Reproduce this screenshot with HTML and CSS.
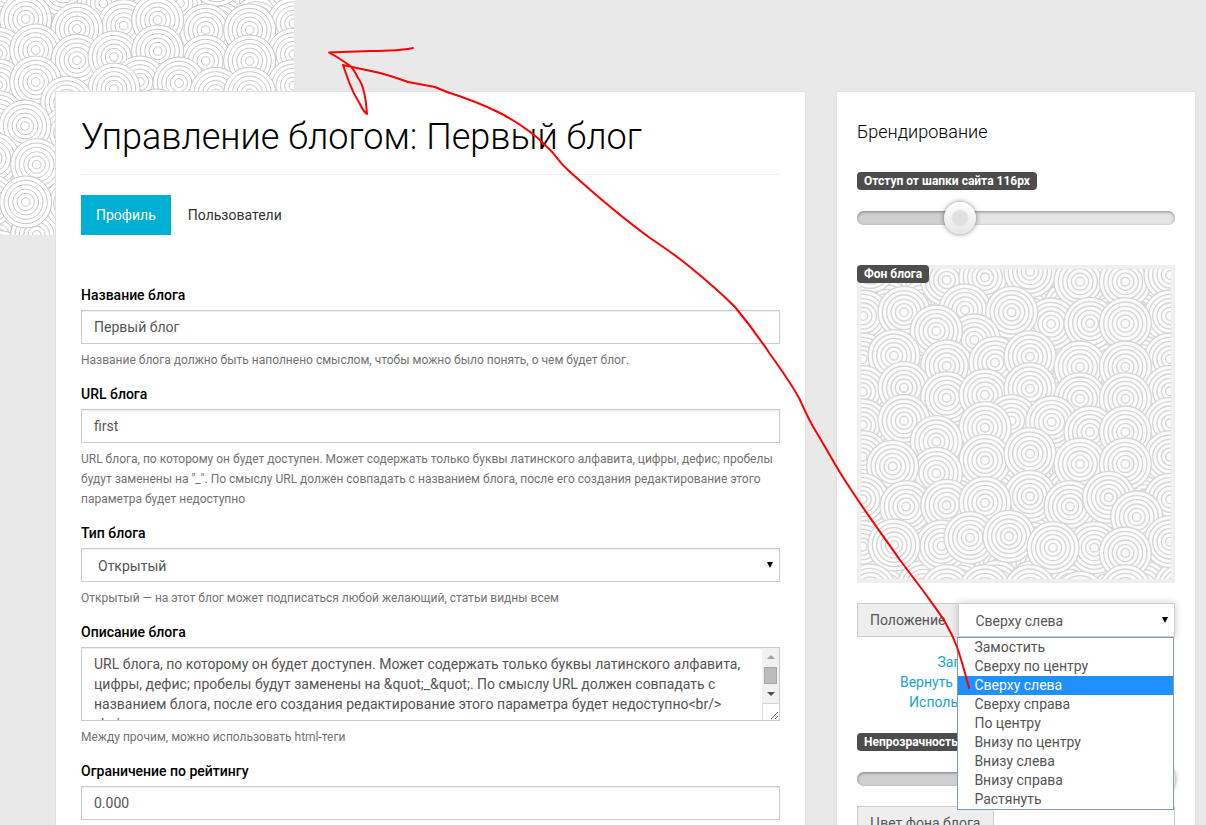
FILE: index.html
```
<!DOCTYPE html>
<html lang="ru">
<head>
    <meta charset="UTF-8">
    <meta name="viewport" content="width=device-width, initial-scale=1.0">
    <title>Управление блогом: Первый блог</title>
    <link rel="stylesheet" href="styles.css">
</head>
<body>
    <svg class="page-pattern" id="page-pattern" viewBox="0 0 882 705" aria-hidden="true"></svg>

    <div class="wrapper">
        <main class="panel content">
            <h1>Управление блогом: Первый блог</h1>

            <nav class="tabs">
                <a href="#" class="tab active">Профиль</a>
                <a href="#" class="tab">Пользователи</a>
            </nav>

            <form class="blog-form">
                <div class="field">
                    <label for="blog-title">Название блога</label>
                    <input type="text" class="control" id="blog-title" value="Первый блог">
                    <p class="note">Название блога должно быть наполнено смыслом, чтобы можно было понять, о чем будет блог.</p>
                </div>

                <div class="field">
                    <label for="blog-url">URL блога</label>
                    <input type="text" class="control" id="blog-url" value="first">
                    <p class="note">URL блога, по которому он будет доступен. Может содержать только буквы латинского алфавита, цифры, дефис; пробелы будут заменены на "_". По смыслу URL должен совпадать с названием блога, после его создания редактирование этого параметра будет недоступно</p>
                </div>

                <div class="field">
                    <label for="blog-type">Тип блога</label>
                    <div class="select">
                        <select class="control" id="blog-type">
                            <option>Открытый</option>
                            <option>Закрытый</option>
                        </select>
                    </div>
                    <p class="note">Открытый — на этот блог может подписаться любой желающий, статьи видны всем</p>
                </div>

                <div class="field">
                    <label for="blog-description">Описание блога</label>
                    <div class="textarea">
                        <textarea class="control" id="blog-description">URL блога, по которому он будет доступен. Может содержать только буквы латинского алфавита, цифры, дефис; пробелы будут заменены на &amp;quot;_&amp;quot;. По смыслу URL должен совпадать с названием блога, после его создания редактирование этого параметра будет недоступно&lt;br/&gt;
&lt;br/&gt;
</textarea>
                        <div class="scrollbar" aria-hidden="true">
                            <span class="scroll-up"></span>
                            <span class="scroll-thumb"></span>
                            <span class="scroll-down"></span>
                        </div>
                    </div>
                    <p class="note">Между прочим, можно использовать html-теги</p>
                </div>

                <div class="field">
                    <label for="blog-rating">Ограничение по рейтингу</label>
                    <input type="text" class="control" id="blog-rating" value="0.000">
                </div>
            </form>
        </main>

        <aside class="panel sidebar">
            <h2>Брендирование</h2>

            <label class="badge" for="header-offset">Отступ от шапки сайта 116px</label>
            <input type="range" class="slider offset" id="header-offset" min="0" max="380" value="116">

            <div class="preview">
                <span class="badge">Фон блога</span>
                <svg class="preview-pattern" id="preview-pattern" viewBox="33 27 930 930" aria-hidden="true"></svg>
            </div>

            <div class="group">
                <label class="addon" for="position">Положение</label>
                <div class="select focused">
                    <select class="control" id="position">
                        <option>Сверху слева</option>
                    </select>
                    <ul class="dropdown">
                        <li>Замостить</li>
                        <li>Сверху по центру</li>
                        <li class="selected">Сверху слева</li>
                        <li>Сверху справа</li>
                        <li>По центру</li>
                        <li>Внизу по центру</li>
                        <li>Внизу слева</li>
                        <li>Внизу справа</li>
                        <li>Растянуть</li>
                    </ul>
                </div>
            </div>

            <div class="links">
                <a href="#">Загрузить изображение</a>
                <a href="#">Вернуть предыдущее изображение</a>
                <a href="#">Использовать стандартный фон</a>
            </div>

            <label class="badge" for="opacity">Непрозрачность фона</label>
            <input type="range" class="slider opacity" id="opacity" min="0" max="100" value="100">

            <div class="group">
                <label class="addon" for="color">Цвет фона блога</label>
                <input type="text" class="control" id="color">
            </div>
        </aside>
    </div>

    <svg class="arrow" width="1206" height="825" aria-hidden="true">
        <path d="M413 48C400 51 385 51 370 51L329 52.5L337 57L349 65Q354 69 358 78Q362 83 364 92Q366 100 367 114Q363 111 360 104Q353 93 349 82L343 65C352 67 368 70 380 73Q395 77 408 82L435 87L447 92C466 98 484 105 500 113Q530 129 546 146Q552 151 557 158Q562 165 569 171C590 190 620 216 650 238C665 248 678 257 690 267C706 280 720 292 735 307C750 325 760 339 770 354C785 375 793 386 800 400C805 411 809 420 815 430C828 451 838 471 850 488C868 516 884 537 900 560L924 592C932 603 939 612 945 622C951 632 954 639 957 647C962 661 965 673 969 688"/>
    </svg>

    <script src="script.js"></script>
</body>
</html>
```
FILE: styles.css
```
* {
    box-sizing: border-box;
}
body {
    position: relative;
    height: 100vh;
    margin: 0;
    overflow: hidden;
    font-family: Roboto, "Liberation Sans", sans-serif;
    font-size: 14px;
    line-height: 20px;
    color: #333;
    background: #e9e9e9;
}
a {
    color: #19a5cb;
    text-decoration: none;
}
h1 {
    margin: 0 0 20px;
    padding: 20px 0 12px;
    border-bottom: 1px solid #eee;
    font-size: 36px;
    font-weight: 300;
    line-height: 50px;
    color: #000;
}
h2 {
    margin: 0 0 30px;
    font-size: 18px;
    font-weight: 300;
    line-height: 20px;
    color: #000;
}
.page-pattern {
    position: absolute;
    top: 0;
    left: 0;
    width: 294px;
    height: 235px;
}
.ring {
    fill: #fff;
    stroke: #c8c8c8;
    stroke-width: 3;
}
.wrapper {
    position: relative;
    display: grid;
    grid-template-columns: 1fr 360px;
    gap: 30px;
    min-height: 100%;
    padding: 91px 10px 0 55px;
}
.panel {
    border: 1px solid #e2e2e2;
    border-bottom: 0;
    background: #fff;
}
.content {
    padding: 0 25px;
}
.sidebar {
    padding: 30px 20px;
}

/* Tabs */
.tabs {
    display: flex;
    gap: 2px;
    margin-bottom: 50px;
}
.tab {
    padding: 10px 15px;
    color: #333;
}
.tab.active {
    color: #fff;
    background: #00b0d4;
}

/* Form */
.field {
    margin-bottom: 14px;
}
.field label {
    display: block;
    margin-bottom: 5px;
    font-weight: 500;
    color: #000;
}
.note {
    margin: 6px 0 0;
    font-size: 12px;
    color: #737373;
}
.control {
    display: block;
    width: 100%;
    height: 34px;
    padding: 6px 12px;
    border: 1px solid #ccc;
    border-radius: 0;
    outline: 0;
    font: inherit;
    color: #555;
    background: #fff;
    box-shadow: inset 0 1px 1px rgba(0,0,0,0.075);
    appearance: none;
}
.textarea {
    position: relative;
}
.textarea .control {
    height: 74px;
    padding-right: 24px;
    resize: vertical;
}
.scrollbar {
    position: absolute;
    top: 1px;
    right: 1px;
    display: flex;
    flex-direction: column;
    align-items: center;
    justify-content: space-between;
    width: 17px;
    height: 56px;
    padding: 7px 0;
    border-bottom: 1px solid #d6d6d6;
    background: #f1f1f1;
    pointer-events: none;
}
/* Left edge of the resize corner */
.scrollbar::after {
    content: "";
    position: absolute;
    top: 56px;
    left: 0;
    height: 16px;
    border-left: 1px solid #d6d6d6;
}
.scroll-up, .scroll-down {
    border: 4px solid transparent;
}
.scroll-up {
    border-top: 0;
    border-bottom-color: #a3a3a3;
}
.scroll-down {
    border-bottom: 0;
    border-top-color: #505050;
}
.scroll-thumb {
    width: 13px;
    height: 17px;
    border: 1px solid #a8a8a8;
    background: #bcbcbc;
}
.select {
    position: relative;
    flex: 1;
}
.select .control {
    padding: 7px 16px 5px;
}
.select::after {
    content: "";
    position: absolute;
    top: 14px;
    right: 7px;
    border: 3px solid transparent;
    border-top: 6px solid #000;
    border-bottom: 0;
}
.select.focused .control {
    box-shadow: 0 0 8px rgba(0,0,0,0.2);
}

/* Sidebar */
.badge {
    display: table;
    padding: 0 7px;
    border-radius: 4px;
    font-size: 12px;
    font-weight: 700;
    line-height: 18px;
    color: #fff;
    background: #4d4d4d;
}
.slider {
    display: block;
    width: 100%;
    height: 14px;
    margin: 21px 0 40px;
    border-radius: 7px;
    background: linear-gradient(to right, #d0d0d0 32%, #e4e4e4 32%);
    box-shadow: inset 0 1px 3px rgba(0,0,0,0.4);
    appearance: none;
}
.slider.opacity {
    margin-bottom: 20px;
    background: #d0d0d0;
}
.slider::-webkit-slider-thumb {
    width: 32px;
    height: 32px;
    border: 0;
    border-radius: 50%;
    background:
        radial-gradient(circle at 50% 50%, #e0e0e0 7px, transparent 9px),
        linear-gradient(#fff, #e6e6e6);
    box-shadow: 0 0 5px rgba(0,0,0,0.5);
    appearance: none;
}
.preview {
    position: relative;
    border: 4px solid #efefef;
    margin-bottom: 20px;
}
.preview .badge {
    position: absolute;
    top: -4px;
    left: -4px;
}
.preview-pattern {
    display: block;
    width: 100%;
}
.preview-pattern .ring {
    fill: #fbfbfb;
    stroke: #d6d6d6;
    stroke-width: 4;
}
.group {
    display: flex;
}
.group .control {
    flex: 1;
}
.addon {
    padding: 6px 12px;
    border: 1px solid #ccc;
    border-right-color: #eee;
    color: #555;
    background: #eee;
}
.dropdown {
    position: absolute;
    top: 34px;
    left: -1px;
    right: 1px;
    z-index: 1;
    margin: 0;
    padding: 0;
    border: 1px solid #7f9db9;
    list-style: none;
    line-height: 19px;
    color: #555;
    background: #fff;
}
.dropdown li {
    padding: 0 16px;
}
.dropdown .selected {
    color: #fff;
    background: #1e90ff;
}
.links {
    display: flex;
    flex-direction: column;
    align-items: center;
    margin: 15px 0 21px;
}

/* Hand-drawn pointer from the option to the page background */
.arrow {
    position: absolute;
    top: 0;
    left: 0;
    z-index: 2;
    pointer-events: none;
}
.arrow path {
    fill: none;
    stroke: #f00;
    stroke-width: 2;
    stroke-linejoin: round;
    stroke-linecap: round;
}
```
FILE: script.js
```
// Radii of one ring, from the outside in
const RADII = [78, 65, 52, 39, 26, 13];

// Centres in drawing order, lower rings cover the upper ones
const PAGE_RINGS = [
    [30, -40], [190, -30], [310, 10], [540, 10], [650, -60], [880, -30], [77, 57], [371, 77], [231, 87], [617, 90],
    [473, 60], [880, 70], [749, 90],
    [-5, 160], [107, 150], [617, 183], [231, 181], [342, 171], [473, 153], [880, 163], [749, 183],
    [-5, 255], [107, 246], [420, 246], [537, 249], [342, 267], [880, 257], [647, 280], [749, 280],
    [470, 345], [200, 307], [-5, 350], [200, 400], [75, 378],
    [-20, 475], [215, 500], [110, 494], [-30, 600], [110, 705], [213, 610], [77, 606]
];

const PREVIEW_RINGS = [
    [60, 20], [290, 60], [405, 52], [540, 35], [690, 65], [826, 65], [960, 45],
    [40, 168], [162, 157], [345, 150], [603, 192], [485, 157], [720, 190], [960, 168], [826, 191],
    [373, 240], [259, 213],
    [38, 297], [132, 287], [290, 318], [435, 308], [540, 290], [690, 321], [960, 297], [826, 321],
    [38, 395], [162, 383], [290, 413], [405, 405], [540, 386], [690, 416], [960, 394], [826, 416],
    [38, 495], [162, 482], [485, 482], [605, 486], [405, 503], [720, 516], [960, 490], [826, 516],
    [259, 545], [405, 601], [540, 581], [690, 612], [960, 590], [826, 612], [38, 590], [259, 640], [128, 619],
    [540, 709], [38, 718], [168, 740], [290, 736], [405, 728], [660, 740], [776, 712], [960, 718], [860, 771],
    [38, 860], [275, 858], [132, 855], [360, 833], [477, 829], [733, 863], [609, 863], [960, 845], [826, 879],
    [60, 990], [290, 992], [405, 992], [540, 992], [690, 1012], [826, 992]
];

function ringMarkup([x, y]) {
    return RADII.map(r => `<circle class="ring" cx="${x}" cy="${y}" r="${r}"/>`).join('');
}

function drawRings(id, rings) {
    const svg = document.getElementById(id);
    const filler = [];

    // Back layer, visible only in the gaps
    for (let y = 0; y <= 1020; y += 70) {
        for (let x = 0; x <= 1020; x += 110) {
            filler.push([x, y]);
        }
    }

    svg.innerHTML = filler.concat(rings).map(ringMarkup).join('');
}

drawRings('page-pattern', PAGE_RINGS);
drawRings('preview-pattern', PREVIEW_RINGS);
```
